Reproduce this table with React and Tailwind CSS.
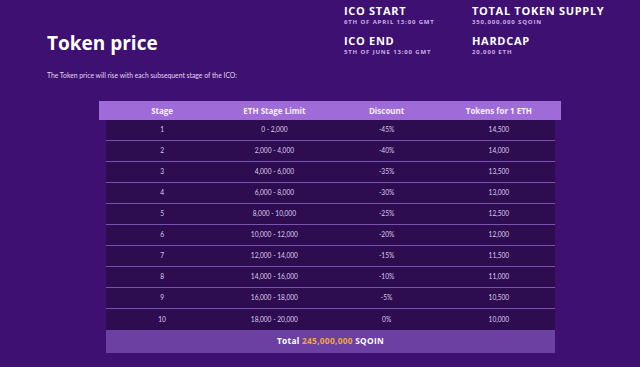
import React from "react";

const rows = [
  ["1", "0 - 2,000", "-45%", "14,500"],
  ["2", "2,000 - 4,000", "-40%", "14,000"],
  ["3", "4,000 - 6,000", "-35%", "13,500"],
  ["4", "6,000 - 8,000", "-30%", "13,000"],
  ["5", "8,000 - 10,000", "-25%", "12,500"],
  ["6", "10,000 - 12,000", "-20%", "12,000"],
  ["7", "12,000 - 14,000", "-15%", "11,500"],
  ["8", "14,000 - 16,000", "-10%", "11,000"],
  ["9", "16,000 - 18,000", "-5%", "10,500"],
  ["10", "18,000 - 20,000", "0%", "10,000"],
];

const facts = [
  ["ICO START", "6TH OF APRIL 13:00 GMT"],
  ["TOTAL TOKEN SUPPLY", "350,000,000 SQOIN"],
  ["ICO END", "5TH OF JUNE 13:00 GMT"],
  ["HARDCAP", "20,000 ETH"],
];

export default function App() {
  return (
    <div className="w-[640px] h-[367px] overflow-hidden bg-[#3d1071] font-['Open_Sans',sans-serif] text-white">
      {/* Top: title + ICO facts */}
      <div className="flex items-start">
        <div className="w-[344px] pl-[47px] pt-[31px] shrink-0">
          <h1 className="text-[19px] leading-[24px] font-bold text-white">Token price</h1>
          <p className="mt-[16px] font-['Lato',sans-serif] text-[6.8px] leading-[9px] text-[#e2d6f0]">
            The Token price will rise with each subsequent stage of the ICO:
          </p>
        </div>
        <div className="grid grid-cols-[128px_150px] gap-y-[8px] pt-[4px]">
          {facts.map(([title, sub]) => (
            <div key={title}>
              <div className="text-[11px] leading-[13px] font-bold tracking-[0.7px] text-white">
                {title}
              </div>
              <div className="mt-[2px] text-[6px] leading-[7px] font-bold tracking-[0.85px] text-[#c9b2e6]">
                {sub}
              </div>
            </div>
          ))}
        </div>
      </div>

      {/* Table */}
      <div className="ml-[99px] mt-[21px] w-[462px]">
        <div className="h-[19px] bg-[#9f6bd8] pl-[7px] pr-[6px]">
          <div className="grid grid-cols-4 h-full items-center text-center text-[8px] font-bold text-[#f7f0fd]">
            <div>Stage</div>
            <div>ETH Stage Limit</div>
            <div>Discount</div>
            <div>Tokens for 1 ETH</div>
          </div>
        </div>
        <div className="ml-[7px] mr-[6px]">
          {rows.map((r, i) => (
            <div
              key={r[0]}
              className={
                "grid grid-cols-4 h-[21px] items-center text-center bg-[#2e0c50] font-['Lato',sans-serif] text-[6.6px] text-[#dccdee] " +
                (i < rows.length - 1 ? "border-b border-[#7c51b3]" : "")
              }
            >
              {r.map((c, j) => (
                <div key={j}>{c}</div>
              ))}
            </div>
          ))}
          <div className="h-[23px] bg-[#6c3fa3] flex items-center justify-center text-[8.3px] font-bold tracking-[0.3px] text-white">
            Total&nbsp;<span className="text-[#f2a54c]">245,000,000</span>&nbsp;SQOIN
          </div>
        </div>
      </div>
    </div>
  );
}
